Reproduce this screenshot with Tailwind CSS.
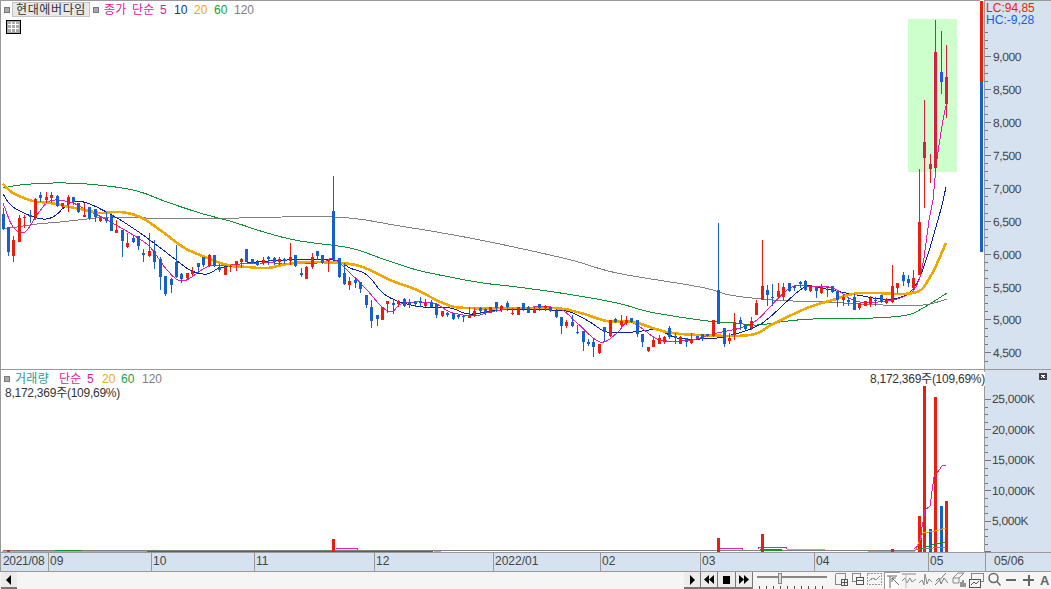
<!DOCTYPE html>
<html lang="ko">
<head>
<meta charset="utf-8">
<script src="https://cdn.jsdelivr.net/npm/@tailwindcss/browser@4"></script>
</head>
<body class="m-0 bg-white">
<div class="w-[1051px] h-[589px] flex flex-col overflow-hidden text-[12px] leading-[14px] text-[#444] font-['Liberation_Sans','Noto_Sans_CJK_KR',sans-serif]">

  <!-- price pane -->
  <div class="flex h-[370px] border-b border-[#999]">
    <div class="relative w-[981px] border-l border-t border-[#999]">
      <svg class="absolute -left-px -top-px" width="981" height="369" viewBox="0 0 981 369" shape-rendering="crispEdges" fill="none">
        <rect x="908" y="19" width="49" height="153" fill="#ccffcc"/>
        <polyline data-smooth="1" stroke="#808080" points="3,229 17,227 37,224 60,222 87,219 110,217 150,218 233,218 335,217 400,226 480,240 567,259 617,273 700,287 730,295 773,300 823,302 883,305 923,305 947,299"/>
        <polyline data-smooth="1" stroke="#109030" points="3,188 20,185 50,183 87,184 133,190 167,202 200,213 233,222 267,233 300,241 350,248 383,259 417,270 450,277 483,283 517,287 567,294 617,303 650,312 700,320 733,323 757,325 780,322 813,319 873,318 907,315 923,308 947,293"/>
        <polyline data-smooth="1" stroke="#0a20a0" points="3,194 13,207 37,218 53,217 70,203 87,203 117,218 143,235 167,253 190,270 207,274 220,268 247,263 287,260 333,260 350,268 367,275 383,293 400,302 423,307 450,308 470,314 500,310 550,310 570,312 590,322 607,332 633,332 657,330 677,338 700,339 723,337 753,328 770,317 803,288 820,288 857,295 893,299 917,283 938,220 946,187"/>
        <polyline data-smooth="1" stroke="#e020b0" points="3,203 13,227 25,232 37,215 50,201 70,202 83,208 107,220 133,235 150,247 167,270 183,281 207,267 227,265 260,263 317,263 333,259 350,273 367,290 383,308 393,311 403,303 433,303 450,312 473,316 490,312 517,308 557,308 577,323 600,342 617,333 627,322 640,327 660,340 690,340 717,333 740,328 757,320 790,288 813,287 833,288 860,302 903,297 920,277 929,220 933,200 936,167 943,120 947,103"/>
        <polyline data-smooth="1" stroke="#f0a800" stroke-width="2.6" points="3,184 13,193 33,201 50,203 80,209 100,213 120,212 140,217 160,230 183,247 200,255 227,265 247,267 267,268 287,264 313,262 350,264 370,270 390,280 417,290 443,303 467,308 550,308 577,312 607,321 633,322 667,332 700,335 750,335 773,324 807,308 833,300 860,293 913,293 930,277 946,243"/>
        <path id="wr" stroke="#ee1c0c"/>
        <path id="wb" stroke="#1560d0"/>
        <path id="br" stroke="#ee1c0c" stroke-width="3"/>
        <path id="bb" stroke="#1560d0" stroke-width="3"/>
        <path stroke="#ee1c0c" d="M919.5 169V222M924.5 172V208M930.5 172V183M935.5 168V172"/>
        <path stroke="#ee1c0c" stroke-width="3" d="M919.5 222V275"/>
        <path stroke="#d81c44" d="M924.5 100V172M930.5 154V172M935.5 20V52M946.5 45V118"/>
        <path stroke="#d81c44" stroke-width="3" d="M924.5 142V158M930.5 164V169M935.5 52V168M946.5 77V104"/>
        <path stroke="#2255ee" d="M941.5 31V94"/>
        <path stroke="#2255ee" stroke-width="3" d="M941.5 72V82"/>
      </svg>
      <div class="relative flex items-center h-[15px] mt-px">
        <span class="w-[6px] h-[6px] ml-[3px] bg-[#aaa] border border-[#777]"></span>
        <span class="ml-[2px] w-[78px] h-[15px] bg-[#e8e8e8] border border-[#c4c4c4] text-center text-[#333] leading-[14px] tracking-[0.6px]">현대에버다임</span>
        <span class="ml-[3px] w-[6px] h-[6px] bg-[#aaa] border border-[#777]"></span>
        <span class="ml-[5px] text-[#e0189c] w-[28px] tracking-[0.3px]">종가</span>
        <span class="text-[#e0189c] w-[28px] tracking-[0.3px]">단순</span>
        <span class="text-[#e0189c] w-[14px]">5</span>
        <span class="text-[#0a30b0] w-[20px]">10</span>
        <span class="text-[#f5a800] w-[20px]">20</span>
        <span class="text-[#10a040] w-[20px]">60</span>
        <span class="text-[#808080]">120</span>
      </div>
      <div class="relative ml-[5px] mt-[3px] w-[15px] h-[14px] border border-black bg-[#aaa] p-px">
        <svg width="11" height="10" viewBox="0 0 11 10" fill="none" stroke="#fff" shape-rendering="crispEdges"><path d="M3.5 0V10M7.5 0V10M0 2.5H11M0 6.5H11"/></svg>
      </div>
    </div>
    <div class="w-[3px] flex flex-col">
      <div class="h-[81px] bg-[#ee1c0c] mt-px"></div>
      <div class="h-[170px] bg-[#1560d0]"></div>
    </div>
    <div class="relative w-[67px] ml-px border-l border-t border-[#999] bg-[#d6e2f0]">
      <svg class="absolute -left-px -top-px" width="66" height="369" viewBox="985 0 66 369" shape-rendering="crispEdges">
        <path id="t1" stroke="#777" fill="none"/>
        <g class="fill-[#444] text-[12px] tracking-[-0.4px]" text-anchor="end" text-rendering="geometricPrecision" shape-rendering="auto">
          <text x="1022" y="61">9,000</text><text x="1022" y="94">8,500</text><text x="1022" y="127">8,000</text><text x="1022" y="160">7,500</text><text x="1022" y="193">7,000</text><text x="1022" y="226">6,500</text><text x="1022" y="259">6,000</text><text x="1022" y="292">5,500</text><text x="1022" y="324">5,000</text><text x="1022" y="357">4,500</text>
        </g>
      </svg>
      <div class="relative flex flex-col bg-[#d6e2f0] h-[26px] pl-px w-[50px]">
        <span class="text-[#ee1c0c] mt-px h-[12px] leading-[12px]">LC:94,85</span>
        <span class="text-[#1060e0] h-[12px] leading-[12px]">HC:-9,28</span>
      </div>
    </div>
  </div>

  <!-- volume pane -->
  <div class="flex h-[183px] border-b border-[#999]">
    <div class="relative w-[985px] border-l border-r border-[#999]">
      <svg class="absolute -left-px top-0" width="985" height="182" viewBox="0 370 985 182" shape-rendering="crispEdges" fill="none">
        <path stroke="#808080" d="M3 550H916"/>
        <path stroke="#f0a800" d="M2 551H147M434 551H441M868 551H915"/>
        <path stroke="#109030" d="M147 551H433M55 550H82"/>
        <path stroke="#109030" stroke-width="2" d="M760 550H782"/>
        <path stroke="#f0a800" d="M787 549H825"/>
        <path stroke="#e020b0" d="M336 548H357V550M720 549V548H742V550M758 549V547H786V549"/>
        <path stroke="#ee1c0c" stroke-width="3" d="M8.5 552V550M333.5 552V539M718.5 552V538M762.5 552V534M892.5 552V549M919.5 552V516M924.5 552V385M935.5 552V397M946.5 552V501"/>
        <path stroke="#1560d0" d="M921.5 552V528"/>
        <path stroke="#1560d0" stroke-width="3" d="M930.5 552V529M941.5 552V506"/>
        <polyline stroke="#808080" points="916,550 920,549 946,547"/>
        <polyline stroke="#109030" points="920,549 935,544 946,542"/>
        <polyline stroke="#f0a800" points="915,551 923,533 935,531 946,528"/>
        <polyline stroke="#e020b0" points="914,549 919,545 925,510 930,506 934,477 942,466 946,465"/>
      </svg>
      <div class="relative flex items-center h-[15px] mt-px">
        <span class="w-[6px] h-[6px] ml-[3px] bg-[#aaa] border border-[#777]"></span>
        <span class="ml-[5px] w-[44px] text-[#2a9d8f] tracking-[0.3px]">거래량</span>
        <span class="w-[28px] text-[#e0189c] tracking-[0.3px]">단순</span>
        <span class="w-[15px] text-[#e0189c]">5</span>
        <span class="w-[19px] text-[#f5a800]">20</span>
        <span class="w-[21px] text-[#10a040]">60</span>
        <span class="text-[#808080]">120</span>
        <span class="ml-auto mr-[-1px] bg-white text-[#333] tracking-[-0.25px]">8,172,369주(109,69%)</span>
      </div>
      <div class="relative ml-[4px] text-[#333] tracking-[-0.25px]">8,172,369주(109,69%)</div>
    </div>
    <div class="relative flex-1 bg-[#d6e2f0]">
      <svg class="absolute left-0 top-0" width="65" height="182" viewBox="986 370 65 182" shape-rendering="crispEdges">
        <path id="t2" stroke="#777" fill="none"/>
        <g class="fill-[#444] text-[12px] tracking-[-0.3px]" text-rendering="geometricPrecision" shape-rendering="auto">
          <text x="993" y="403">25,000K</text><text x="993" y="434">20,000K</text><text x="993" y="464">15,000K</text><text x="993" y="495">10,000K</text><text x="993" y="525">5,000K</text>
        </g>
        <rect x="1040" y="373" width="8" height="7" fill="#444"/>
        <path d="M1042 375l4 3m0-3l-4 3" stroke="#fff" fill="none"/>
      </svg>
    </div>
  </div>

  <!-- time axis -->
  <div class="flex h-[19px] bg-[#d6e2f0] border-b border-[#999] leading-[17px] text-[#444]">
    <div class="w-[49px] pl-[2px] border-l border-r border-[#999] tracking-[-0.3px]">2021/08</div>
    <div class="w-[103px] pl-px border-r border-[#999]">09</div>
    <div class="w-[103px] pl-px border-r border-[#999]">10</div>
    <div class="w-[120px] pl-px border-r border-[#999]">11</div>
    <div class="w-[119px] pl-px border-r border-[#999]">12</div>
    <div class="w-[107px] pl-px border-r border-[#999]">2022/01</div>
    <div class="w-[100px] pl-px border-r border-[#999]">02</div>
    <div class="w-[114px] pl-px border-r border-[#999]">03</div>
    <div class="w-[114px] pl-px border-r border-[#999]">04</div>
    <div class="w-[57px] pl-px border-r border-[#999]">05</div>
    <div class="flex-1 pl-[8px]">05/06</div>
  </div>

  <!-- toolbar -->
  <div class="flex flex-1 items-stretch bg-[#f5f5f5]">
    <div class="w-[16px] ml-px bg-[#ececec] border-b-2 border-[#777] flex items-center justify-center">
      <svg width="8" height="10" viewBox="0 0 8 10"><path d="M6 0V10L1 5Z" fill="#000"/></svg>
    </div>
    <div class="flex-1"></div>
    <div class="w-[17px] bg-[#ececec] border-r border-b-2 border-[#777] flex items-center justify-center">
      <svg width="8" height="10" viewBox="0 0 8 10"><path d="M2 0V10L7 5Z" fill="#000"/></svg>
    </div>
    <div class="w-[17px] bg-[#ececec] border-r border-b-2 border-[#777] flex items-center justify-center">
      <svg width="10" height="9" viewBox="0 0 10 9"><path d="M5 0V9L0 4.500ZM10 0V9L5 4.500Z" fill="#000"/></svg>
    </div>
    <div class="w-[18px] bg-[#ececec] border-r border-b-2 border-[#777] flex items-center justify-center">
      <div class="w-[7px] h-[8px] bg-black"></div>
    </div>
    <div class="w-[17px] bg-[#ececec] border-r border-b-2 border-[#777] flex items-center justify-center">
      <svg width="10" height="9" viewBox="0 0 10 9"><path d="M0 0V9L5 4.500ZM5 0V9L10 4.500Z" fill="#000"/></svg>
    </div>
    <svg class="ml-[4px]" width="72" height="17" viewBox="0 0 72 17" shape-rendering="crispEdges" fill="none">
      <path d="M0 5H70" stroke="#888" stroke-width="2"/>
      <path d="M2 14v3M9 14v3M16 14v3M23 14v3M30 14v3M37 14v3M44 14v3M51 14v3M58 14v3M65 14v3" stroke="#555"/>
      <rect x="21" y="1" width="3" height="10" fill="#ddd" stroke="#888"/>
    </svg>
    <svg class="ml-[5px]" width="15" height="17" viewBox="0 0 15 17" fill="none" stroke="#888" shape-rendering="crispEdges">
      <path d="M1.500 1.500H11.500V6.500M6.500 12.500H1.500V1.500"/><rect x="7.500" y="7.500" width="6" height="6" stroke="#555"/><path d="M10.500 7.500V13.500M7.500 10.500H13.500" stroke="#555"/>
    </svg>
    <svg class="ml-[2px]" width="14" height="17" viewBox="0 0 14 17" fill="none" stroke="#888" shape-rendering="crispEdges">
      <rect x="1.500" y="1.500" width="8" height="8"/><rect x="5.500" y="5.500" width="7" height="7" fill="#f5f5f5" stroke="#555"/><path d="M5.500 8.500H12.500" stroke="#555"/>
    </svg>
    <svg class="ml-[2px]" width="16" height="17" viewBox="0 0 16 17" fill="none" stroke="#999" stroke-dasharray="2 1" shape-rendering="crispEdges">
      <rect x="0.500" y="1.500" width="14" height="11"/><path d="M2 9L6 6L9 8L13 4" stroke-dasharray="none"/>
    </svg>
    <div class="ml-[1px] w-[16px] bg-white flex items-center justify-center border-l border-t border-[#999]">
      <svg width="14" height="15" viewBox="0 0 14 15" fill="none" stroke="#666"><path d="M1 2H11M4 2V14M6 4L13 11M6 4H10M6 4V8"/></svg>
    </div>
    <svg class="ml-[2px]" width="14" height="17" viewBox="0 0 14 17" fill="none" stroke="#888">
      <path d="M0 2H14M0 9L3 6L5 11L8 6L10 10L14 7"/><path d="M4 2V16" stroke="#bbb"/>
    </svg>
    <svg class="ml-[3px]" width="13" height="17" viewBox="0 0 13 17" fill="none" stroke="#888">
      <path d="M0 11L3 8L5 13L6 2L8 12L10 7L13 10"/>
    </svg>
    <svg class="ml-[3px]" width="13" height="17" viewBox="0 0 13 17" fill="none" stroke="#777">
      <path d="M0 13L11 1M1 9L4 6L6 12L9 6L13 11"/>
    </svg>
    <svg class="ml-[4px]" width="14" height="17" viewBox="0 0 14 17" fill="none" stroke="#888">
      <path d="M1 6L6 1H12L7 6V11H1ZM7 6H1"/><path d="M9 15V10M11 15V8M13 15V11" stroke="#333"/>
    </svg>
    <svg class="ml-[3px]" width="15" height="17" viewBox="0 0 15 17" fill="none" stroke="#888" shape-rendering="crispEdges">
      <rect x="2.500" y="1.500" width="12" height="8"/><rect x="0.500" y="7.500" width="11" height="8" fill="#f5f5f5" stroke="#555"/><path d="M2 13L5 10L7 12L10 9" stroke="#555"/>
    </svg>
    <svg class="ml-[4px]" width="13" height="17" viewBox="0 0 13 17" fill="none" stroke="#666" stroke-width="1.500">
      <circle cx="5.500" cy="6" r="4.500"/><path d="M9 9.500L12.500 13.500"/>
    </svg>
    <svg class="ml-[5px]" width="10" height="17" viewBox="0 0 10 17" shape-rendering="crispEdges"><rect x="0" y="7" width="10" height="2" fill="#666"/></svg>
    <svg class="ml-[7px]" width="11" height="17" viewBox="0 0 11 17" shape-rendering="crispEdges"><path d="M0 7H11V9H0ZM4.500 2.500H6.500V13.500H4.500Z" fill="#666"/></svg>
    <span class="ml-[6px] w-[11px] text-[13px] font-bold text-[#666] leading-[17px]">A</span>
  </div>
</div>

<script>
var g=[
[0,170,`10b115,132,178,180 25b170,170,245,258 40r198,210,258,275 58r135,145,215,215 73r135,140,142,175 91b120,135,140,160 106r85,88,142,150 121b65,75,85,95 139r65,80,90,100 154r65,75,85,100 172b75,78,108,110 187r100,100,108,115 205r75,82,102,125 220b80,82,95,105 235b98,98,125,130 253r98,135,140,142 268b112,112,145,150 286b118,118,140,155 301r142,145,152,156 319b125,145,152,158 334b135,135,182,182 349r150,180,188,190 367b180,180,212,262 382r190,220,232,235 400b195,205,217,220 415b198,198,228,240 430b238,250,255,275 448r190,243,258,260 463b210,243,275,296 481b260,267,322,360 496b318,318,372,378 514b325,327,345,370 529b225,275,322,325 544b308,312,328,340 562r310,310,325,330 577r292,304,312,318 595b280,280,292,310 610b260,262,285,290 628r252,256,288,290 643b256,256,288,290 658b282,292,300,305 676r285,290,314,315 691r285,288,292,305 709r272,274,284,302 724r265,267,275,295 739b238,238,276,276 757b267,268,280,282 772b270,275,285,288 790r260,270,280,285 805b258,262,268,285 823b262,265,275,285 838r262,268,275,285 853b265,268,272,282 871r220,262,272,285 886b255,255,288,290 904b295,310,315,322 919r288,290,326,328 937r248,262,292,296 952b243,243,258,270 967b255,255,280,282 985r268,270,272,305 1000b18,123,268,268 1018b265,265,322,325 1033b280,308,342,345`],
[350,240,`-2r110,122,135,150 15b112,120,128,145 32b125,125,148,158 50b165,165,195,203 65b180,200,243,263 82b225,225,238,258 97r200,200,240,240 113r183,183,192,218 130b180,190,195,222 145r180,182,192,200 163b175,178,198,200 178b178,186,192,205 196b182,186,192,202 211b172,182,190,200 226r178,188,197,200 244b180,186,200,202 259b192,192,225,233 277r212,212,228,232 292b215,220,225,232 310b218,220,237,240 325b222,225,230,238 340b225,228,230,247 358r200,227,233,235 373r205,212,227,230 391b200,205,212,225 406b205,208,218,225 421r200,202,218,220 439b185,186,205,215 454r195,198,208,215 472b183,188,200,212 487r205,218,222,225 505r202,202,225,226 520b190,190,207,212 535b198,202,218,220 553r202,208,219,220 568b192,192,205,212 586r195,198,205,212 601b200,202,212,217 619b208,212,230,235 634b232,232,258,283 649r240,245,258,265 667b225,245,258,262 682b255,275,278,282 700b272,273,305,333 715b298,306,312,318 730b295,306,322,350 748r312,312,340,343 763b262,262,275,305 781r240,240,288,290 796b235,238,245,250 814r226,243,255,262 829r228,240,248,255 844b235,235,245,250 862b240,240,282,290 877b283,283,305,322 895r320,322,332,335 910r295,300,320,322 928r285,295,312,313 943r288,290,305,312 958b258,265,290,298 976b278,288,295,312 991r288,290,312,312 1009b295,295,305,320 1024r280,300,310,313`],
[690,220,`3r340,358,368,372 22b348,348,355,360 37b342,342,358,362 52b342,342,348,352 70r300,300,348,350 85b8,210,312,312 103b324,324,372,380 118r340,354,362,372 133r280,306,344,360 151b292,300,312,330 166b312,315,328,330 184r292,303,325,330 199r240,248,285,285 217r60,198,240,240 232b195,210,225,258 247b192,232,235,258 265r190,212,230,235 280r188,200,232,240 298b188,188,214,215 313b195,198,205,212 331b183,186,192,205 346b180,182,210,212 361r195,198,212,215 379b200,202,212,235 394r192,202,220,222 412b198,202,205,232 427b198,198,215,218 442b212,212,240,260 460r225,230,240,258 475b235,240,245,258 493b222,232,270,270 508r248,250,265,270 526r242,242,258,258 541r228,235,252,260 556b232,240,242,258 574b225,225,245,250 589r235,238,248,252 607r135,198,245,250 622r188,190,203,218 640b155,165,183,198 655b165,178,190,200 670r150,175,205,210`]
];
var p={wr:'',wb:'',br:'',bb:''};
g.forEach(function(s){s[2].split(' ').forEach(function(t){
  var m=t.match(/^(-?\d+)([rb])(\d+),(\d+),(\d+),(\d+)$/);
  var x=Math.floor(s[0]+m[1]/3)+0.5,c=m[2],v=[m[3],m[4],m[5],m[6]].map(function(n){return Math.round(s[1]+n/3)});
  p['w'+c]+='M'+x+' '+v[0]+'V'+v[3];
  p['b'+c]+='M'+x+' '+v[1]+'V'+Math.max(v[2],v[1]+1);
})});
Object.keys(p).forEach(function(k){document.getElementById(k).setAttribute('d',p[k])});
document.querySelectorAll('polyline[data-smooth]').forEach(function(l){
  var q=l.getAttribute('points').split(' ').map(function(s){return s.split(',').map(Number)}),o=[];
  for(var i=0;i<q.length-1;i++){
    var a=q[Math.max(i-1,0)],b=q[i],c=q[i+1],d=q[Math.min(i+2,q.length-1)],n=Math.max(1,Math.ceil((c[0]-b[0])/3));
    for(var k=0;k<n;k++){var t=k/n,u=[0,1].map(function(j){return 0.5*(2*b[j]+(c[j]-a[j])*t+(2*a[j]-5*b[j]+4*c[j]-d[j])*t*t+(3*b[j]-a[j]-3*c[j]+d[j])*t*t*t)});o.push(u[0].toFixed(1)+','+u[1].toFixed(1))}
  }
  o.push(q[q.length-1].join(','));
  l.setAttribute('points',o.join(' '));
});
var a='',i;
for(i=0;i<44;i++){var y=Math.round(23.5+i*8.22)+0.5;a+='M986 '+y+'h'+(i%4==0?6:3)}
document.getElementById('t1').setAttribute('d',a);
a='';for(i=0;i<22;i++){var y=Math.round(399+i*7.62)+0.5;a+='M986 '+y+'h'+(i%4==0?6:3)}
document.getElementById('t2').setAttribute('d',a);
</script>
</body>
</html>
